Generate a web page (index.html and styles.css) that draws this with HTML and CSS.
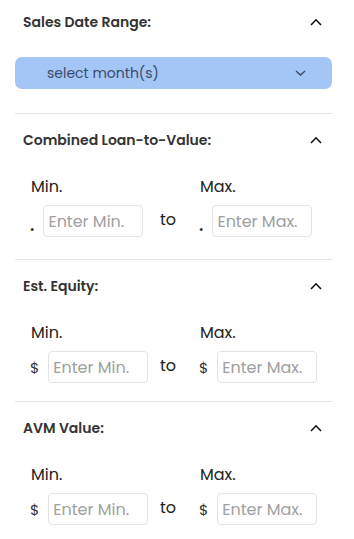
FILE: index.html
```html
<!DOCTYPE html>
<html lang="en">
<head>
    <meta charset="UTF-8" />
    <meta name="viewport" content="width=device-width, initial-scale=1.0" />
    <title>Filters</title>
    <link rel="stylesheet" href="styles.css">
</head>
<body>
<aside class="filters">
    <section class="filter">
        <div class="filter-head">
            <span class="filter-title">Sales Date Range:</span>
            <svg class="chev" width="12" height="8" viewBox="0 0 12 8"><path d="M1 7 L6 1.8 L11 7" fill="none" stroke="#111" stroke-width="1.6"/></svg>
        </div>
        <div class="select">
            <span>select month(s)</span>
            <svg width="11" height="6" viewBox="0 0 11 6"><path d="M1 1 L5.5 5 L10 1" fill="none" stroke="#3b4a6b" stroke-width="1.4"/></svg>
        </div>
    </section>

    <section class="filter cltv">
        <div class="filter-head">
            <span class="filter-title">Combined Loan-to-Value:</span>
            <svg class="chev" width="12" height="8" viewBox="0 0 12 8"><path d="M1 7 L6 1.8 L11 7" fill="none" stroke="#111" stroke-width="1.6"/></svg>
        </div>
        <div class="range">
            <span class="range-label">Min.</span>
            <span></span>
            <span class="range-label">Max.</span>
            <div class="range-field"><span class="prefix dot">.</span><input type="text" placeholder="Enter Min."></div>
            <span class="range-to">to</span>
            <div class="range-field"><span class="prefix dot">.</span><input type="text" placeholder="Enter Max."></div>
        </div>
    </section>

    <section class="filter equity">
        <div class="filter-head">
            <span class="filter-title">Est. Equity:</span>
            <svg class="chev" width="12" height="8" viewBox="0 0 12 8"><path d="M1 7 L6 1.8 L11 7" fill="none" stroke="#111" stroke-width="1.6"/></svg>
        </div>
        <div class="range">
            <span class="range-label">Min.</span>
            <span></span>
            <span class="range-label">Max.</span>
            <div class="range-field"><span class="prefix">$</span><input type="text" placeholder="Enter Min."></div>
            <span class="range-to">to</span>
            <div class="range-field"><span class="prefix">$</span><input type="text" placeholder="Enter Max."></div>
        </div>
    </section>

    <section class="filter">
        <div class="filter-head">
            <span class="filter-title">AVM Value:</span>
            <svg class="chev" width="12" height="8" viewBox="0 0 12 8"><path d="M1 7 L6 1.8 L11 7" fill="none" stroke="#111" stroke-width="1.6"/></svg>
        </div>
        <div class="range">
            <span class="range-label">Min.</span>
            <span></span>
            <span class="range-label">Max.</span>
            <div class="range-field"><span class="prefix">$</span><input type="text" placeholder="Enter Min."></div>
            <span class="range-to">to</span>
            <div class="range-field"><span class="prefix">$</span><input type="text" placeholder="Enter Max."></div>
        </div>
    </section>
</aside>
</body>
</html>
```

FILE: styles.css
```css
* {
    box-sizing: border-box;
}
body {
    margin: 0;
    font-family: Poppins, "Open Sans", Arial, sans-serif;
    background-color: #fff;
    color: #222;
}
.filters {
    padding: 0 22px 0 15px;
}
.filter {
    border-bottom: 1px solid #e6e6e6;
    padding-bottom: 20px;
}
.filter-head {
    display: flex;
    align-items: center;
    justify-content: space-between;
    height: 20px;
    margin-top: 16px;
    padding: 0 10px 0 8px;
}
.filter:first-child .filter-head {
    margin-top: 12px;
}
.filter:first-child {
    padding-bottom: 24px;
}
.filter.cltv {
    padding-bottom: 22px;
}
.filter.equity {
    padding-bottom: 18px;
}
.filter-title {
    font-size: 14px;
    font-weight: 600;
    color: #333;
}
.chev {
    display: block;
}
.select {
    display: flex;
    align-items: center;
    justify-content: space-between;
    height: 32px;
    margin-top: 25px;
    padding: 0 26px 0 32px;
    background-color: #a3c6f7;
    border-radius: 7px;
    font-size: 14px;
    color: #3b4a6b;
}
.select svg {
    display: block;
}
.range {
    display: grid;
    grid-template-columns: 130px 39px 1fr;
    align-items: center;
    row-gap: 8px;
    margin-top: 27px;
    padding-left: 15px;
}
.range-label {
    font-size: 16px;
    line-height: 20px;
    color: #222;
    padding-left: 1px;
}
.range-field {
    display: flex;
    align-items: center;
    gap: 9px;
}
.prefix {
    font-size: 15px;
    color: #333;
}
.prefix.dot {
    font-size: 17px;
    font-weight: 600;
    line-height: 1;
    padding-top: 8px;
}
.range-to {
    font-size: 16px;
    color: #222;
    margin-top: -4px;
}
.range-field input {
    width: 100px;
    height: 32px;
    border: 1px solid #e3e3e3;
    border-radius: 4px;
    padding: 0 4px;
    font-family: inherit;
    font-size: 16px;
    color: #222;
    outline: none;
}
.range-field input::placeholder {
    color: #a0a0a0;
}
```
